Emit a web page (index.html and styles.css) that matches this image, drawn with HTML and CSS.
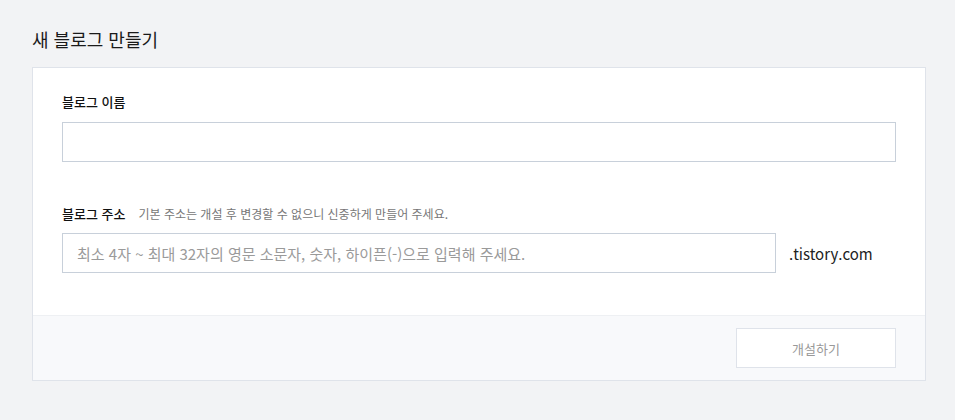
FILE: index.html
```html
<!DOCTYPE html>
<html lang="ko">
<head>
<meta charset="utf-8">
<title>새 블로그 만들기</title>
<link rel="stylesheet" href="styles.css">
</head>
<body>
<div class="page">
  <h1 class="title">새 블로그 만들기</h1>
  <div class="card">
    <div class="card-body">
      <div class="field">
        <label class="label">블로그 이름</label>
        <input class="input" type="text">
      </div>
      <div class="field field-addr">
        <div class="label-row">
          <label class="label">블로그 주소</label>
          <span class="desc">기본 주소는 개설 후 변경할 수 없으니 신중하게 만들어 주세요.</span>
        </div>
        <div class="addr-row">
          <input class="input input-addr" type="text" placeholder="최소 4자 ~ 최대 32자의 영문 소문자, 숫자, 하이픈(-)으로 입력해 주세요.">
          <span class="domain">.tistory.com</span>
        </div>
      </div>
    </div>
    <div class="card-foot">
      <button class="btn" type="button">개설하기</button>
    </div>
  </div>
</div>
</body>
</html>
```
FILE: styles.css
```css
* { box-sizing: border-box; }
html, body { margin: 0; padding: 0; }
body {
  background: #f2f3f5;
  font-family: "Noto Sans CJK KR", "Noto Sans", sans-serif;
  color: #222;
}
.page {
  padding: 26px 30px 0 32px;
  width: 955px;
}
.title {
  margin: 0 0 14px 0;
  font-size: 18px;
  line-height: 27px;
  font-weight: 400;
  color: #1a1a1a;
}
.card {
  width: 894px;
  background: #fff;
  border: 1px solid #dfe3ea;
}
.card-body {
  padding: 24px 29px 42px 29px;
}
.label {
  display: block;
  font-size: 13px;
  line-height: 19px;
  font-weight: 500;
  color: #111;
}
.field .label { margin-bottom: 11px; }
.field-addr { margin-top: 42px; }
.label-row {
  display: flex;
  align-items: baseline;
  gap: 13px;
  margin-bottom: 10px;
}
.label-row .label { margin-bottom: 0; }
.desc {
  font-size: 12px;
  color: #777;
}
.input {
  display: block;
  width: 834px;
  height: 40px;
  border: 1px solid #c8d0da;
  background: #fff;
  padding: 0 14px;
  font-family: inherit;
  font-size: 15px;
  color: #222;
  outline: none;
}
.input::placeholder { color: #9a9a9a; }
.addr-row {
  display: flex;
  align-items: center;
  gap: 13px;
}
.input-addr { width: 714px; }
.domain {
  font-size: 15px;
  color: #222;
}
.card-foot {
  background: #f8f9fb;
  border-top: 1px solid #eef0f3;
  padding: 12px 29px 12px 29px;
  display: flex;
  justify-content: flex-end;
}
.btn {
  width: 160px;
  height: 40px;
  background: #fff;
  border: 1px solid #dfe3ea;
  font-family: inherit;
  font-size: 13px;
  color: #999;
  cursor: pointer;
}
```
